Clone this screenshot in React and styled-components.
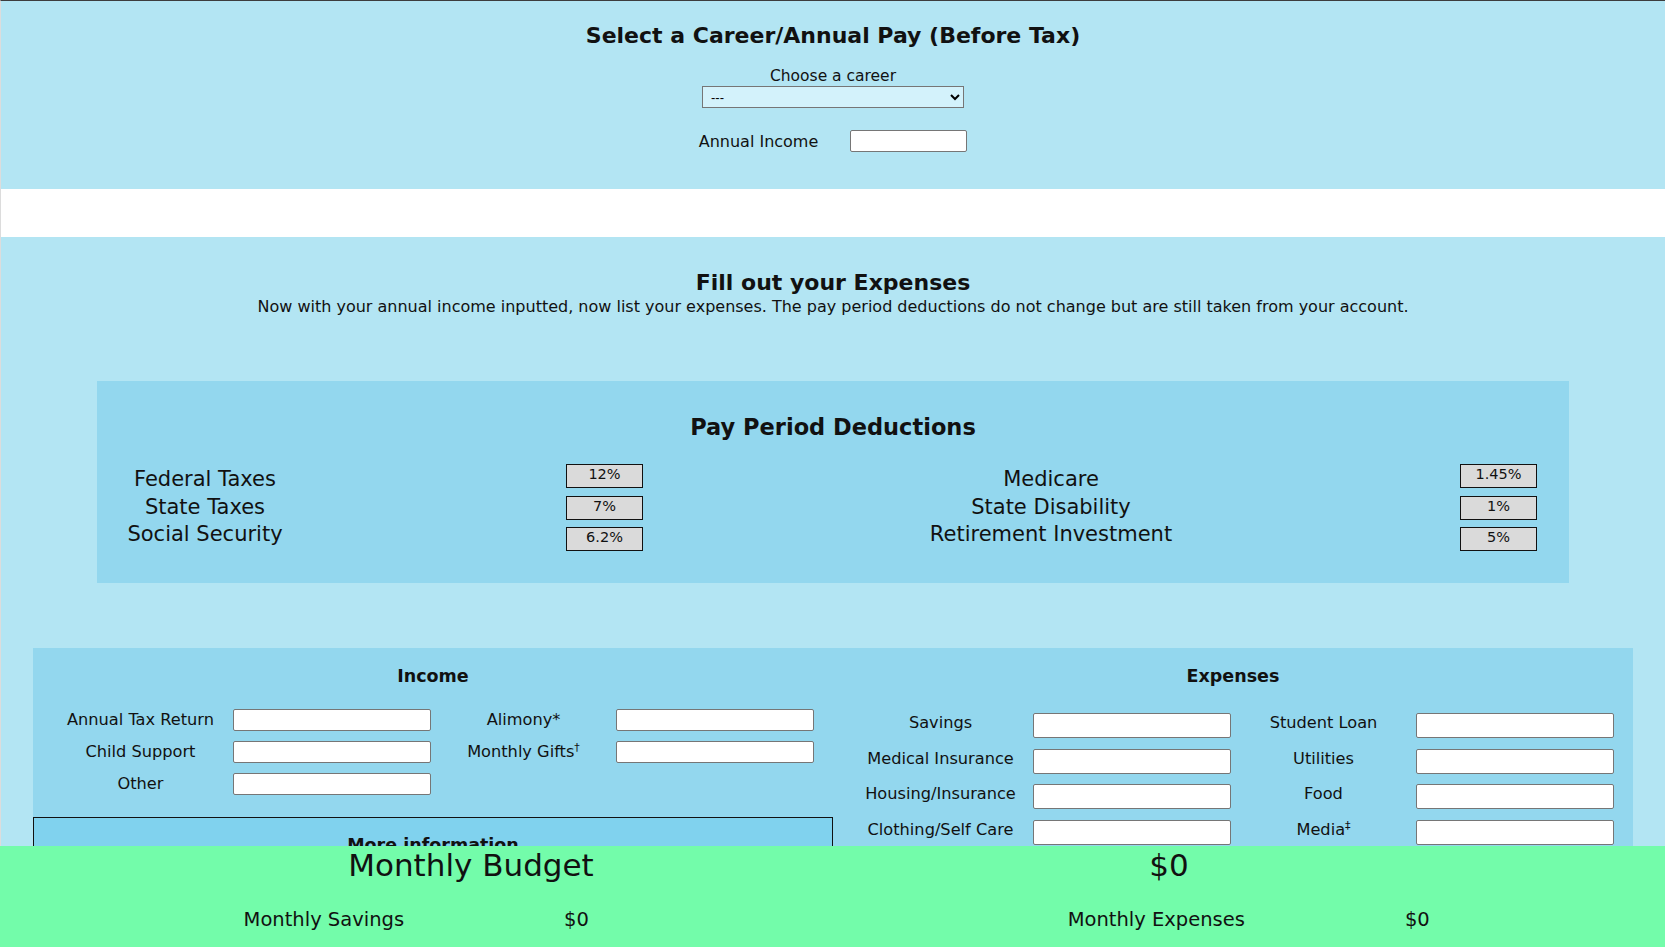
import React from 'react';
import styled, { createGlobalStyle } from 'styled-components';

const GlobalStyle = createGlobalStyle`
    html, body {
        margin: 0;
        padding: 0;
        background: #ffffff;
    }
    body {
        font-family: "DejaVu Sans", "Liberation Sans", sans-serif;
        color: #111;
    }
    * {
        box-sizing: border-box;
    }
`;

const deductionsLeft = [
    { label: 'Federal Taxes', value: '12%' },
    { label: 'State Taxes', value: '7%' },
    { label: 'Social Security', value: '6.2%' },
];

const deductionsRight = [
    { label: 'Medicare', value: '1.45%' },
    { label: 'State Disability', value: '1%' },
    { label: 'Retirement Investment', value: '5%' },
];

const incomeFields = [
    { label: 'Annual Tax Return' },
    { label: 'Alimony*' },
    { label: 'Child Support' },
    { label: 'Monthly Gifts', mark: '†' },
    { label: 'Other' },
];

const expenseFields = [
    { label: 'Savings' },
    { label: 'Student Loan' },
    { label: 'Medical Insurance' },
    { label: 'Utilities' },
    { label: 'Housing/Insurance' },
    { label: 'Food' },
    { label: 'Clothing/Self Care' },
    { label: 'Media', mark: '‡' },
];

const App = () => {
    return (
        <Page>
            <GlobalStyle />
            <CareerSection>
                <SectionTitle>Select a Career/Annual Pay (Before Tax)</SectionTitle>
                <ChooseLabel>Choose a career</ChooseLabel>
                <CareerSelect defaultValue="none">
                    <option value="none">---</option>
                </CareerSelect>
                <AnnualRow>
                    <AnnualLabel>Annual Income</AnnualLabel>
                    <AnnualInput type="text" />
                </AnnualRow>
            </CareerSection>

            <ExpenseSection>
                <SectionTitle>Fill out your Expenses</SectionTitle>
                <Lead>
                    Now with your annual income inputted, now list your expenses. The pay period deductions do not change but are still taken from your account.
                </Lead>

                <DeductionPanel>
                    <PanelTitle>Pay Period Deductions</PanelTitle>
                    <DeductionBody>
                        <LabelColumn $width={216}>
                            {deductionsLeft.map((d) => (
                                <DeductionLabel key={d.label}>{d.label}</DeductionLabel>
                            ))}
                        </LabelColumn>
                        <BoxColumn $offset={253}>
                            {deductionsLeft.map((d) => (
                                <RateBox key={d.label}>{d.value}</RateBox>
                            ))}
                        </BoxColumn>
                        <LabelColumn $width={400} $offset={208}>
                            {deductionsRight.map((d) => (
                                <DeductionLabel key={d.label}>{d.label}</DeductionLabel>
                            ))}
                        </LabelColumn>
                        <BoxColumn $offset={209}>
                            {deductionsRight.map((d) => (
                                <RateBox key={d.label}>{d.value}</RateBox>
                            ))}
                        </BoxColumn>
                    </DeductionBody>
                </DeductionPanel>

                <BudgetPanel>
                    <Half>
                        <HalfTitle>Income</HalfTitle>
                        <FieldGrid $gap={10} $top={21}>
                            {incomeFields.map((f) => (
                                <React.Fragment key={f.label}>
                                    <FieldLabel>
                                        {f.label}
                                        {f.mark && <sup>{f.mark}</sup>}
                                    </FieldLabel>
                                    <MoneyInput type="text" $height={22} />
                                </React.Fragment>
                            ))}
                        </FieldGrid>
                        <MoreInfo>
                            <MoreInfoTitle>More information</MoreInfoTitle>
                        </MoreInfo>
                    </Half>
                    <Half>
                        <HalfTitle>Expenses</HalfTitle>
                        <FieldGrid $gap={10.5} $top={25}>
                            {expenseFields.map((f) => (
                                <React.Fragment key={f.label}>
                                    <FieldLabel $lift={5}>
                                        {f.label}
                                        {f.mark && <sup>{f.mark}</sup>}
                                    </FieldLabel>
                                    <MoneyInput type="text" $height={25} />
                                </React.Fragment>
                            ))}
                        </FieldGrid>
                    </Half>
                </BudgetPanel>
            </ExpenseSection>

            <Footer>
                <BudgetRow>
                    <BudgetText>Monthly Budget</BudgetText>
                    <BudgetText>$0</BudgetText>
                </BudgetRow>
                <TotalsRow>
                    <TotalPair>
                        <span>Monthly Savings</span>
                        <span>$0</span>
                    </TotalPair>
                    <TotalPair>
                        <span>Monthly Expenses</span>
                        <span>$0</span>
                    </TotalPair>
                </TotalsRow>
            </Footer>
        </Page>
    );
}

const Page = styled.div`
    height: 100vh;
    overflow: hidden;
    border-top: 1px solid #3d3d3d;
    border-left: 1px solid #dcdcdc;
`;

const CareerSection = styled.section`
    background-color: #b3e5f3;
    padding: 21px 0 37px;
    display: flex;
    flex-direction: column;
    align-items: center;
`;

const SectionTitle = styled.h2`
    margin: 0;
    font-size: 22px;
    line-height: 28px;
    font-weight: 700;
    text-align: center;
`;

const ChooseLabel = styled.div`
    margin-top: 16px;
    font-size: 15.5px;
    line-height: 20px;
`;

const CareerSelect = styled.select`
    width: 262px;
    height: 22px;
    background-color: #d3f2fb;
    border: 1px solid #767676;
    border-radius: 0;
    font-family: "Liberation Sans", sans-serif;
    font-size: 13px;
    padding: 0 4px;
`;

const AnnualRow = styled.div`
    margin-top: 22px;
    display: flex;
    align-items: center;
    gap: 32px;
    height: 22px;
`;

const AnnualLabel = styled.span`
    font-size: 16px;
    line-height: 20px;
    padding-top: 2px;
`;

const AnnualInput = styled.input`
    width: 117px;
    height: 22px;
    border: 1px solid #767676;
    border-radius: 2px;
    background: #fff;
`;

const ExpenseSection = styled.section`
    margin-top: 48px;
    background-color: #b3e5f3;
    padding-top: 32px;
    min-height: 800px;
`;

const Lead = styled.p`
    margin: 0;
    font-size: 16px;
    line-height: 20px;
    text-align: center;
`;

const DeductionPanel = styled.div`
    margin: 64px 96px 0;
    background-color: #93d7ee;
    padding: 32px 0 32px;
`;

const PanelTitle = styled.h2`
    margin: 0;
    font-size: 22.5px;
    line-height: 28px;
    font-weight: 700;
    text-align: center;
`;

const DeductionBody = styled.div`
    margin-top: 23px;
    display: flex;
    align-items: flex-start;
`;

const LabelColumn = styled.div`
    width: ${(p) => p.$width}px;
    margin-left: ${(p) => p.$offset || 0}px;
    padding-top: 2px;
    display: flex;
    flex-direction: column;
    align-items: center;
`;

const DeductionLabel = styled.div`
    font-size: 21px;
    line-height: 27.5px;
    white-space: nowrap;
`;

const BoxColumn = styled.div`
    margin-left: ${(p) => p.$offset}px;
    display: flex;
    flex-direction: column;
    gap: 7.5px;
`;

const RateBox = styled.div`
    width: 77px;
    height: 24px;
    background-color: #dadada;
    border: 1px solid #111;
    font-size: 14.5px;
    line-height: 19px;
    text-align: center;
`;

const BudgetPanel = styled.div`
    margin: 65px 32px 0;
    background-color: #93d7ee;
    display: grid;
    grid-template-columns: 1fr 1fr;
    align-items: start;
    min-height: 400px;
`;

const Half = styled.div`
    padding-top: 17px;
`;

const HalfTitle = styled.h3`
    margin: 0;
    font-size: 17.5px;
    line-height: 23px;
    font-weight: 700;
    text-align: center;
`;

const FieldGrid = styled.div`
    margin-top: ${(p) => p.$top}px;
    padding-left: 15px;
    display: grid;
    grid-template-columns: 185px 198px 185px 198px;
    row-gap: ${(p) => p.$gap}px;
    align-items: center;
`;

const FieldLabel = styled.label`
    font-size: 16.2px;
    line-height: 20px;
    text-align: center;
    white-space: nowrap;
    padding-bottom: ${(p) => p.$lift || 0}px;

    sup {
        font-size: 11px;
        line-height: 0;
    }
`;

const MoneyInput = styled.input`
    width: 198px;
    height: ${(p) => p.$height}px;
    border: 1px solid #767676;
    border-radius: 2px;
    background: #fff;
`;

const MoreInfo = styled.div`
    margin-top: 22px;
    border: 1px solid #111;
    background-color: #80d2ee;
    padding-top: 16px;
    height: 160px;
`;

const MoreInfoTitle = styled.h3`
    margin: 0;
    font-size: 17.5px;
    line-height: 23px;
    font-weight: 700;
    text-align: center;
`;

const Footer = styled.footer`
    position: fixed;
    left: 0;
    right: 0;
    bottom: 0;
    height: 101px;
    background-color: #73fcaa;
`;

const BudgetRow = styled.div`
    display: grid;
    grid-template-columns: 942px 454px;
`;

const BudgetText = styled.div`
    font-size: 31px;
    line-height: 38px;
    font-weight: 400;
    text-align: center;
`;

const TotalsRow = styled.div`
    margin-top: 24px;
    display: grid;
    grid-template-columns: 1fr 1fr;
`;

const TotalPair = styled.div`
    display: flex;
    justify-content: center;
    gap: 160px;
    font-size: 19.5px;
    line-height: 24px;
    font-weight: 400;
`;

export default App;
